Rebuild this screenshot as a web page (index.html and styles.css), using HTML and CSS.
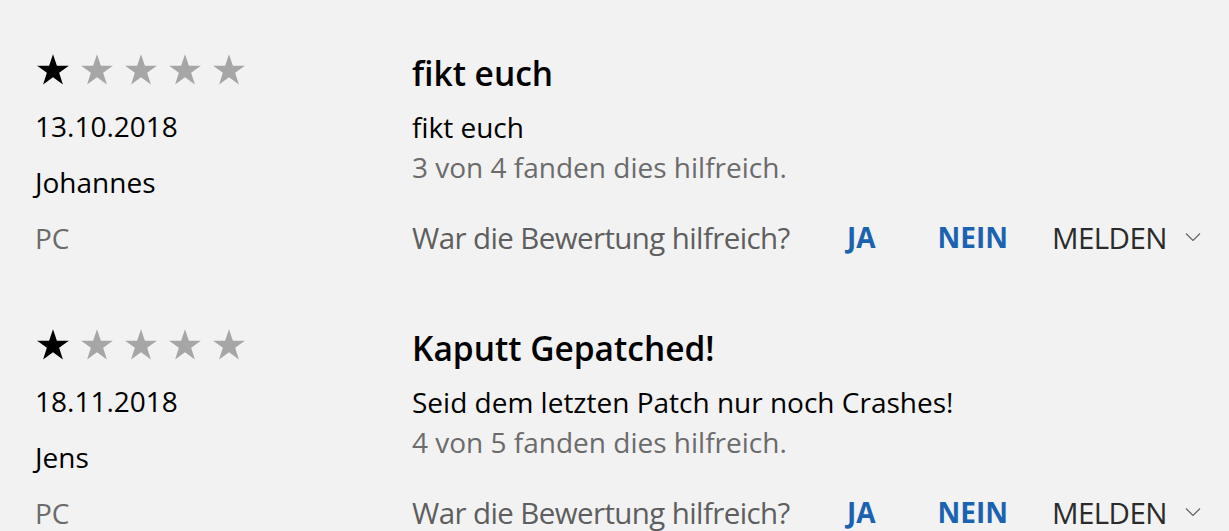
FILE: index.html
```html
<!DOCTYPE html>
<html lang="de">
<head>
  <meta charset="UTF-8" />
  <title>Bewertungen</title>
  <link rel="stylesheet" href="styles.css">
</head>
<body>
  <div class="reviews">
    <div class="review">
      <div class="meta">
        <div class="stars">
          <svg class="star on" viewBox="0 0 24 24"><path d="M12 1.5l2.6 7.6h8l-6.5 4.8 2.5 7.7L12 16.9l-6.6 4.7 2.5-7.7-6.5-4.8h8z"/></svg>
          <svg class="star" viewBox="0 0 24 24"><path d="M12 1.5l2.6 7.6h8l-6.5 4.8 2.5 7.7L12 16.9l-6.6 4.7 2.5-7.7-6.5-4.8h8z"/></svg>
          <svg class="star" viewBox="0 0 24 24"><path d="M12 1.5l2.6 7.6h8l-6.5 4.8 2.5 7.7L12 16.9l-6.6 4.7 2.5-7.7-6.5-4.8h8z"/></svg>
          <svg class="star" viewBox="0 0 24 24"><path d="M12 1.5l2.6 7.6h8l-6.5 4.8 2.5 7.7L12 16.9l-6.6 4.7 2.5-7.7-6.5-4.8h8z"/></svg>
          <svg class="star" viewBox="0 0 24 24"><path d="M12 1.5l2.6 7.6h8l-6.5 4.8 2.5 7.7L12 16.9l-6.6 4.7 2.5-7.7-6.5-4.8h8z"/></svg>
        </div>
        <div class="line">13.10.2018</div>
        <div class="line">Johannes</div>
        <div class="line device">PC</div>
      </div>
      <div class="body">
        <h2 class="title">fikt euch</h2>
        <p class="text">fikt euch</p>
        <p class="helpful-count">3 von 4 fanden dies hilfreich.</p>
        <div class="actions">
          <span class="question">War die Bewertung hilfreich?</span>
          <button class="vote">JA</button>
          <button class="vote">NEIN</button>
          <button class="report">MELDEN
            <svg class="chevron" viewBox="0 0 16 8"><path d="M1 0.5l7 7 7-7"/></svg>
          </button>
        </div>
      </div>
    </div>

    <div class="review">
      <div class="meta">
        <div class="stars">
          <svg class="star on" viewBox="0 0 24 24"><path d="M12 1.5l2.6 7.6h8l-6.5 4.8 2.5 7.7L12 16.9l-6.6 4.7 2.5-7.7-6.5-4.8h8z"/></svg>
          <svg class="star" viewBox="0 0 24 24"><path d="M12 1.5l2.6 7.6h8l-6.5 4.8 2.5 7.7L12 16.9l-6.6 4.7 2.5-7.7-6.5-4.8h8z"/></svg>
          <svg class="star" viewBox="0 0 24 24"><path d="M12 1.5l2.6 7.6h8l-6.5 4.8 2.5 7.7L12 16.9l-6.6 4.7 2.5-7.7-6.5-4.8h8z"/></svg>
          <svg class="star" viewBox="0 0 24 24"><path d="M12 1.5l2.6 7.6h8l-6.5 4.8 2.5 7.7L12 16.9l-6.6 4.7 2.5-7.7-6.5-4.8h8z"/></svg>
          <svg class="star" viewBox="0 0 24 24"><path d="M12 1.5l2.6 7.6h8l-6.5 4.8 2.5 7.7L12 16.9l-6.6 4.7 2.5-7.7-6.5-4.8h8z"/></svg>
        </div>
        <div class="line">18.11.2018</div>
        <div class="line">Jens</div>
        <div class="line device">PC</div>
      </div>
      <div class="body">
        <h2 class="title">Kaputt Gepatched!</h2>
        <p class="text">Seid dem letzten Patch nur noch Crashes!</p>
        <p class="helpful-count">4 von 5 fanden dies hilfreich.</p>
        <div class="actions">
          <span class="question">War die Bewertung hilfreich?</span>
          <button class="vote">JA</button>
          <button class="vote">NEIN</button>
          <button class="report">MELDEN
            <svg class="chevron" viewBox="0 0 16 8"><path d="M1 0.5l7 7 7-7"/></svg>
          </button>
        </div>
      </div>
    </div>
  </div>
</body>
</html>
```

FILE: styles.css
```css
body {
  margin: 0;
  background: #f2f2f2;
  font-family: "Open Sans", "Noto Sans", sans-serif;
  color: #000;
  overflow: hidden;
}
.reviews {
  padding: 42px 0 0 35px;
}
.review {
  display: grid;
  grid-template-columns: 377px 1fr;
  height: 275px;
}
.stars {
  display: flex;
  align-items: center;
  gap: 8px;
  height: 56px;
}
.star {
  width: 36px;
  height: 36px;
  fill: #a6a6a6;
}
.star.on {
  fill: #000;
}
.line {
  font-size: 28px;
  line-height: 56px;
}
.device {
  color: #6b6b6b;
}
.title {
  margin: 0;
  font-size: 33.5px;
  font-weight: 600;
  line-height: 62px;
}
.text {
  margin: 0;
  font-size: 28px;
  line-height: 46px;
}
.helpful-count {
  margin: 0;
  font-size: 28px;
  line-height: 34px;
  color: #6b6b6b;
}
.actions {
  display: flex;
  align-items: center;
  margin-top: 36px;
  height: 34px;
  font-size: 29.5px;
  font-stretch: 88%;
  letter-spacing: -0.6px;
}
.question {
  color: #5e5e5e;
  width: 435px;
  white-space: nowrap;
}
.actions button {
  font: inherit;
  letter-spacing: inherit;
  background: none;
  border: none;
  padding: 0;
  cursor: pointer;
}
.actions .vote {
  color: #1b63b0;
  font-size: 28px;
  font-weight: 700;
  font-stretch: 100%;
  letter-spacing: 0;
  margin-right: 62px;
}
.actions .vote + .vote {
  margin-right: 44px;
}
.report {
  display: flex;
  align-items: center;
  color: #2b2b2b;
}
.chevron {
  width: 16px;
  height: 8px;
  margin-left: 18px;
  fill: none;
  stroke: #666;
  stroke-width: 1.2;
}
```
